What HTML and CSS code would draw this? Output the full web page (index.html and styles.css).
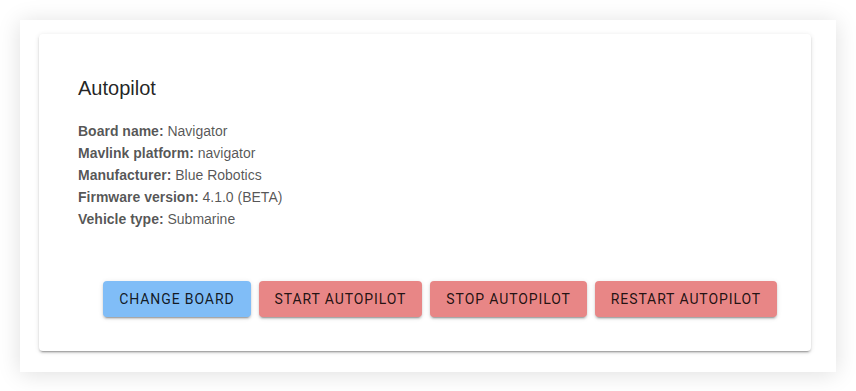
FILE: index.html
```html
<!DOCTYPE html>
<html lang="en">
<head>
    <meta charset="UTF-8">
    <title>Autopilot</title>
    <link rel="stylesheet" href="styles.css">
</head>
<body>
    <div class="sheet">
        <div class="card">
            <div class="card-title">Autopilot</div>
            <div class="info">
                <div><b>Board name:</b> Navigator</div>
                <div><b>Mavlink platform:</b> navigator</div>
                <div><b>Manufacturer:</b> Blue Robotics</div>
                <div><b>Firmware version:</b> 4.1.0 (BETA)</div>
                <div><b>Vehicle type:</b> Submarine</div>
            </div>
            <div class="actions">
                <button class="btn btn-blue">Change board</button>
                <button class="btn btn-red">Start autopilot</button>
                <button class="btn btn-red">Stop autopilot</button>
                <button class="btn btn-red">Restart autopilot</button>
            </div>
        </div>
    </div>
</body>
</html>
```

FILE: styles.css
```css
body {
    margin: 0;
    padding: 20px 20px 20px 20px;
    background: #ffffff;
    font-family: "Liberation Sans", Arial, sans-serif;
}

.sheet {
    background: #ffffff;
    padding: 14px 25px 21px 19px;
    box-shadow: 0 2px 22px rgba(0, 0, 0, 0.13);
}

.card {
    background: #ffffff;
    border-radius: 4px;
    padding: 38px 34px 34px 39px;
    box-shadow: 0 3px 1px -2px rgba(0, 0, 0, 0.2),
                0 2px 2px 0 rgba(0, 0, 0, 0.14),
                0 1px 5px 0 rgba(0, 0, 0, 0.12);
}

.card-title {
    font-size: 20px;
    line-height: 32px;
    color: rgba(0, 0, 0, 0.87);
}

.info {
    margin-top: 16px;
    font-size: 14px;
    line-height: 22px;
    color: rgba(0, 0, 0, 0.68);
}

.info b {
    font-weight: bold;
}

.actions {
    display: flex;
    justify-content: flex-end;
    gap: 8px;
    margin-top: 51px;
}

.btn {
    flex: none;
    height: 36px;
    padding: 0 16px;
    border: 0;
    border-radius: 4px;
    white-space: nowrap;
    font-family: Roboto, sans-serif;
    font-size: 14px;
    font-weight: 400;
    letter-spacing: 0.9px;
    text-transform: uppercase;
    color: rgba(0, 0, 0, 0.87);
    cursor: pointer;
    box-shadow: 0 3px 1px -2px rgba(0, 0, 0, 0.2),
                0 2px 2px 0 rgba(0, 0, 0, 0.14),
                0 1px 5px 0 rgba(0, 0, 0, 0.12);
}

.btn-blue {
    background: #80bdf7;
}

.btn-red {
    background: #e88686;
}
```
